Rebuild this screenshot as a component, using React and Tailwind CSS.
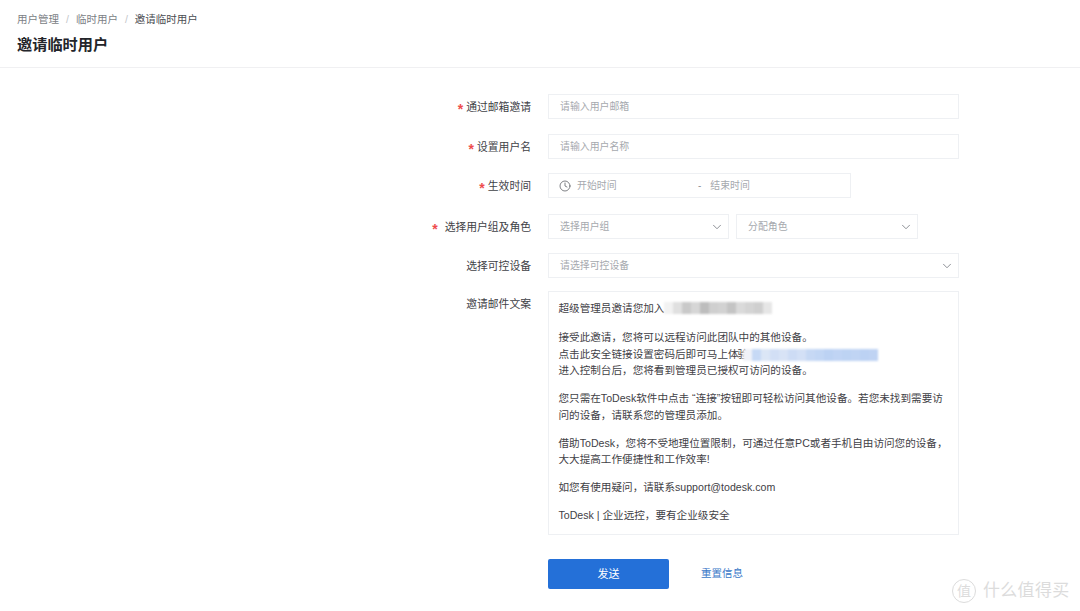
import { ChevronDown, Clock } from 'lucide-react';

const FONT = 'font-["Liberation_Sans","Noto_Sans_CJK_SC",sans-serif]';

function Label({ required, wide, children }) {
  return (
    <div className={`w-[531px] shrink-0 pt-[2px] flex justify-end items-center text-[10.8px] text-[#3f4247] ${wide ? 'gap-[7px]' : 'gap-[3px]'}`}>
      {required && <span className="text-[#ee4d4d] text-[14px] font-bold leading-none pt-[3px]">*</span>}
      <span>{children}</span>
    </div>
  );
}

function Row({ label, required, wide, className, children }) {
  return (
    <div className={`flex h-[25px] ${className}`}>
      <Label required={required} wide={wide}>{label}</Label>
      <div className="ml-[17px] flex gap-[7px]">{children}</div>
    </div>
  );
}

function Field({ width, placeholder, chevron }) {
  return (
    <div className={`${width} h-[25px] border border-[#eef0f3] bg-white pl-[11px] pr-[4px] flex items-center justify-between text-[9.9px] text-[#a6a9ae]`}>
      <span className="pt-[2px]">{placeholder}</span>
      {chevron && <ChevronDown size={14} strokeWidth={1.3} className="text-[#6a6e75]" />}
    </div>
  );
}

function Blur({ colors }) {
  return (
    <span className="inline-flex h-[12px] align-middle blur-[0.8px]">
      {colors.map((c, i) => (
        <span key={i} className="w-[9px] h-full" style={{ background: c }} />
      ))}
    </span>
  );
}

export default function App() {
  return (
    <div className={`relative w-[1080px] h-[611px] overflow-hidden bg-white ${FONT}`}>
      <div className="h-[68px] border-b border-[#f0f0f2] pl-[17px] pt-[12px]">
        <div className="flex items-center text-[10.5px] leading-[14px] text-[#7b7e84]">
          <span>用户管理</span>
          <span className="mx-[7px] text-[#c4c6ca]">/</span>
          <span>临时用户</span>
          <span className="mx-[7px] text-[#c4c6ca]">/</span>
          <span className="text-[#4a4d52]">邀请临时用户</span>
        </div>
        <div className="mt-[9px] text-[15.2px] leading-[20px] font-bold text-[#23252a]">邀请临时用户</div>
      </div>

      <div className="pt-[26px]">
        <Row label="通过邮箱邀请" required>
          <Field width="w-[411px]" placeholder="请输入用户邮箱" />
        </Row>
        <Row label="设置用户名" required className="mt-[15px]">
          <Field width="w-[411px]" placeholder="请输入用户名称" />
        </Row>
        <Row label="生效时间" required className="mt-[14px]">
          <div className="w-[303px] h-[25px] border border-[#eef0f3] pl-[10px] flex items-center text-[9.9px] text-[#a6a9ae]">
            <Clock size={12} strokeWidth={1.5} className="text-[#55585e]" />
            <span className="ml-[6px] w-[121px] pt-[2px]">开始时间</span>
            <span className="text-[#777b82] pt-[2px]">-</span>
            <span className="ml-[9px] pt-[2px]">结束时间</span>
          </div>
        </Row>
        <Row label="选择用户组及角色" required wide className="mt-[16px]">
          <Field width="w-[181px]" placeholder="选择用户组" chevron />
          <Field width="w-[182px]" placeholder="分配角色" chevron />
        </Row>
        <Row label="选择可控设备" className="mt-[14px]">
          <Field width="w-[411px]" placeholder="请选择可控设备" chevron />
        </Row>

        <div className="flex mt-[13px]">
          <div className="w-[531px] shrink-0 text-right text-[10.8px] leading-[26px] text-[#3f4247]">邀请邮件文案</div>
          <div className="ml-[17px] w-[411px] h-[244px] border border-[#eef0f3] pl-[9.5px] pr-[10px] pt-[8px] text-[10.6px] leading-[16.5px] text-[#3f4146]">
            <p className="flex items-center">超级管理员邀请您加入<Blur colors={['#f2f2f2', '#e0e0e0', '#c9c9c9', '#d6d6d6', '#bdbdbd', '#cfcfcf', '#d2d2d2', '#c4c4c4', '#dadada', '#d4d4d4', '#cfcfcf', '#e6e6e6']} /></p>
            <p className="mt-[12.5px]">接受此邀请，您将可以远程访问此团队中的其他设备。</p>
            <p className="flex items-center">点击此安全链接设置密码后即可马上体<span className="-ml-[1px]">验</span><span className="-ml-[5px]"><Blur colors={['#f0f2f8', '#c6d9f5', '#dbe6f6', '#d2dff5', '#d8e3f6', '#cddcf5', '#d3e0f6', '#c6d8f4', '#c2d6f4', '#bcd2f3', '#c0d4f4', '#bdd3f3', '#c0d4f3', '#bcd2f3', '#bfd3f3']} /></span></p>
            <p>进入控制台后，您将看到管理员已授权可访问的设备。</p>
            <p className="mt-[11.5px]">您只需在ToDesk软件中点击 “连接”按钮即可轻松访问其他设备。若您未找到需要访问的设备，请联系您的管理员添加。</p>
            <p className="mt-[11.5px]">借助ToDesk，您将不受地理位置限制，可通过任意PC或者手机自由访问您的设备，大大提高工作便捷性和工作效率!</p>
            <p className="mt-[11.5px]">如您有使用疑问，请联系support@todesk.com</p>
            <p className="mt-[11.5px]">ToDesk | 企业远控，要有企业级安全</p>
          </div>
        </div>

        <div className="flex items-center mt-[24px] ml-[548px]">
          <button className="w-[121px] h-[30px] rounded-[2px] bg-[#2470d8] text-white text-[11px]">发送</button>
          <span className="ml-[32px] text-[10.5px] text-[#3a78c8]">重置信息</span>
        </div>
      </div>

      {/* watermark */}
      <div className="absolute left-[952px] top-[579px] flex items-center gap-[7px] text-[#dcdcdc]">
        <span className="w-[24px] h-[24px] rounded-full border border-[#dcdcdc] flex items-center justify-center text-[14px]">值</span>
        <span className="text-[17px] leading-[24px] tracking-[0.3px]">什么值得买</span>
      </div>
    </div>
  );
}
